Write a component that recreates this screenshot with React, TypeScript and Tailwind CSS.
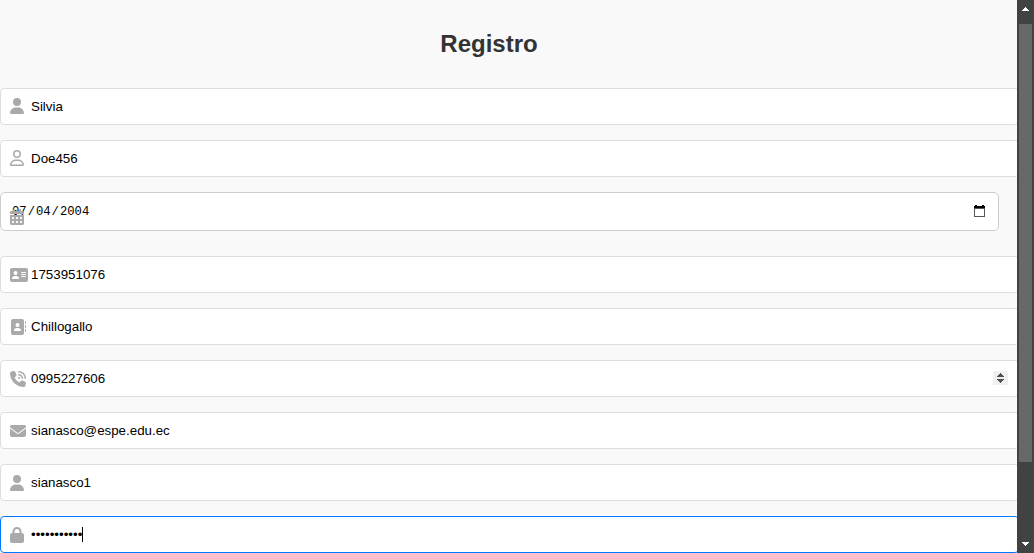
import type { IconType } from "react-icons";
import {
  FaUser,
  FaRegUser,
  FaCalendarDays,
  FaAddressCard,
  FaAddressBook,
  FaPhoneVolume,
  FaEnvelope,
  FaLock,
} from "react-icons/fa6";

type FieldProps = {
  icon: IconType;
  value: string;
  iconClass?: string;
  active?: boolean;
  spinner?: boolean;
};

function Spinner() {
  return (
    <span className="mb-[2px] ml-auto mr-[10px] flex h-[14px] w-[15px] items-center justify-center bg-[#efefef]">
      <svg width="7" height="10" viewBox="0 0 7 10" fill="#505050" shapeRendering="crispEdges">
        <path d="M3 0h1v1h1v1h1v1h1v1H0V3h1V2h1V1h1zM0 6h7v1H6v1H5v1H4v1H3V9H2V8H1V7H0z" />
      </svg>
    </span>
  );
}

function Field({ icon: Icon, value, iconClass = "w-[14px] mt-[11px]", active, spinner }: FieldProps) {
  return (
    <div
      className={`mb-[15px] flex h-[37px] w-[1019px] shrink-0 rounded-[4px] border bg-white pl-[9px] ${
        active ? "border-[#007bff]" : "border-[#dddddd]"
      }`}
    >
      <div className="-mt-px w-[21px] shrink-0">
        <Icon className={`h-4 text-[#aaaaaa] ${iconClass}`} />
      </div>
      <div className="flex flex-1 items-center">
        <span className="text-[13.333px] leading-[15px] text-black">{value}</span>
        {active && <span className="h-[15px] w-px bg-black" />}
        {spinner && <Spinner />}
      </div>
    </div>
  );
}

function DateField() {
  return (
    <div className="relative mb-[25px] flex h-[39px] w-[999px] shrink-0 items-center justify-between rounded-[5px] border border-[#cccccc] bg-white pl-[10px] pr-[13px]">
      <span className="flex pt-[2px] font-['Liberation_Mono',monospace] text-[12.2px] leading-[15px] text-black">
        <span className="px-px">07</span>
        <span>/</span>
        <span className="px-px">04</span>
        <span>/</span>
        <span className="px-px">2004</span>
      </span>
      <svg className="mb-px" width="11" height="12" viewBox="0 0 11 12" shapeRendering="crispEdges">
        <path d="M1 0h2v1h5V0h2v1h1v3H0V1h1z" fill="#000" />
        <path d="M.5 3.5h10v8H.5z" fill="none" stroke="#555" />
      </svg>
      <FaCalendarDays className="absolute left-[9px] top-[16px] h-4 w-[14px] text-[#aaaaaa]" />
    </div>
  );
}

function Scrollbar() {
  return (
    <div className="flex h-full w-[17px] shrink-0 flex-col items-center bg-[#424242]">
      <div className="flex h-[24px] items-start pt-[7px]">
        <svg width="7" height="4" viewBox="0 0 7 4" fill="#fff" shapeRendering="crispEdges">
          <path d="M3 0h1v1h1v1h1v1h1v1H0V3h1V2h1V1h1z" />
        </svg>
      </div>
      <div className="h-[438px] w-[13px] bg-[#686868]" />
      <div className="mt-auto pb-[7px]">
        <svg className="block" width="7" height="4" viewBox="0 0 7 4" fill="#fff" shapeRendering="crispEdges">
          <path d="M0 0h7v1H6v1H5v1H4v1H3V3H2V2H1V1H0z" />
        </svg>
      </div>
    </div>
  );
}

export default function App() {
  return (
    <div className="flex h-[553px] w-[1034px] overflow-hidden bg-[#f9f9f9] font-['Liberation_Sans',Arial,sans-serif]">
      <main className="flex h-full w-[1017px] shrink-0 flex-col overflow-hidden">
        <h2 className="mb-[30px] mt-[30px] w-[978px] shrink-0 text-center text-2xl leading-[28px] font-bold text-[#333333]">
          Registro
        </h2>
        <Field icon={FaUser} value="Silvia" iconClass="w-[14px] mt-[10px]" />
        <Field icon={FaRegUser} value="Doe456" iconClass="w-[14px] mt-[10px]" />
        <DateField />
        <Field icon={FaAddressCard} value="1753951076" iconClass="w-[18px] mt-[11px]" />
        <Field icon={FaAddressBook} value="Chillogallo" iconClass="w-4 mt-[11px]" />
        <Field icon={FaPhoneVolume} value="0995227606" iconClass="w-4 mt-[11px]" spinner />
        <Field icon={FaEnvelope} value="sianasco@espe.edu.ec" iconClass="w-4 mt-[11px]" />
        <Field icon={FaUser} value="sianasco1" />
        <Field icon={FaLock} value="•••••••••••" active />
      </main>
      <Scrollbar />
    </div>
  );
}
